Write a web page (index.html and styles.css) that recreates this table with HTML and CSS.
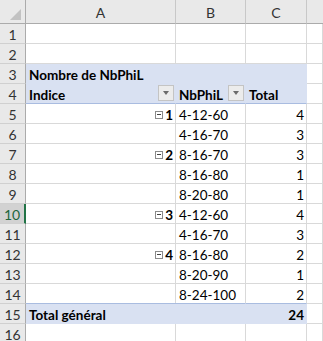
FILE: index.html
```html
<!DOCTYPE html>
<html>
<head>
<meta charset="utf-8">
<link rel="stylesheet" href="styles.css">
</head>
<body>
<div class="sheet">
  <div class="hd corner"><span class="tri"></span></div>
  <div class="hd col">A</div>
  <div class="hd col">B</div>
  <div class="hd col">C</div>
  <div class="hd col last"></div>

  <div class="hd rn">1</div><div class="c"></div><div class="c"></div><div class="c"></div><div class="c"></div>
  <div class="hd rn">2</div><div class="c"></div><div class="c"></div><div class="c"></div><div class="c"></div>

  <div class="hd rn">3</div><div class="c pv b span3">Nombre de NbPhiL</div><div class="c"></div>

  <div class="hd rn">4</div>
  <div class="c pv pvh b sb">Indice<span class="fbtn"><span class="arr"></span></span></div>
  <div class="c pv pvh b sb">NbPhiL<span class="fbtn"><span class="arr"></span></span></div>
  <div class="c pv pvh b">Total</div>
  <div class="c"></div>

  <div class="hd rn">5</div><div class="c r"><span class="mn"></span><b>1</b></div><div class="c">4-12-60</div><div class="c r">4</div><div class="c"></div>
  <div class="hd rn">6</div><div class="c"></div><div class="c">4-16-70</div><div class="c r">3</div><div class="c"></div>
  <div class="hd rn">7</div><div class="c r"><span class="mn"></span><b>2</b></div><div class="c">8-16-70</div><div class="c r">3</div><div class="c"></div>
  <div class="hd rn">8</div><div class="c"></div><div class="c">8-16-80</div><div class="c r">1</div><div class="c"></div>
  <div class="hd rn">9</div><div class="c"></div><div class="c">8-20-80</div><div class="c r">1</div><div class="c"></div>
  <div class="hd rn act">10</div><div class="c r"><span class="mn"></span><b>3</b></div><div class="c">4-12-60</div><div class="c r">4</div><div class="c"></div>
  <div class="hd rn">11</div><div class="c"></div><div class="c">4-16-70</div><div class="c r">3</div><div class="c"></div>
  <div class="hd rn">12</div><div class="c r"><span class="mn"></span><b>4</b></div><div class="c">8-16-80</div><div class="c r">2</div><div class="c"></div>
  <div class="hd rn">13</div><div class="c"></div><div class="c">8-20-90</div><div class="c r">1</div><div class="c"></div>
  <div class="hd rn">14</div><div class="c"></div><div class="c">8-24-100</div><div class="c r">2</div><div class="c"></div>

  <div class="hd rn">15</div><div class="c pv pvt b span2">Total général</div><div class="c pv pvt b r">24</div><div class="c"></div>
  <div class="hd rn">16</div><div class="c"></div><div class="c"></div><div class="c"></div><div class="c"></div>
</div>
</body>
</html>
```
FILE: styles.css
```css
html, body {
  margin: 0;
  padding: 0;
  background: #ffffff;
  overflow: hidden;
}
.sheet {
  display: grid;
  grid-template-columns: 26px 150px 70px 61px 16px;
  grid-template-rows: 24px;
  grid-auto-rows: 20px;
  width: 323px;
  height: 341px;
  overflow: hidden;
  font-family: Lato, "Open Sans", sans-serif;
  font-size: 13.5px;
  color: #000;
}
.hd {
  background: #e9e9e9;
  color: #333;
  box-sizing: border-box;
  border-right: 1px solid #c8c8c8;
  border-bottom: 1px solid #c8c8c8;
  display: flex;
  align-items: center;
  justify-content: center;
  font-size: 14px;
}
.col {
  border-bottom: 1px solid #ababab;
  padding-top: 1px;
}
.col.last { border-right: none; }
.rn {
  border-right: 1px solid #ababab;
  border-bottom: 1px solid #d0d0d0;
  padding-top: 2px;
}
.corner {
  border-right: 1px solid #ababab;
  border-bottom: 1px solid #ababab;
  position: relative;
}
.tri {
  position: absolute;
  right: 4px;
  bottom: 3px;
  width: 0;
  height: 0;
  border-left: 11px solid transparent;
  border-bottom: 11px solid #c2c2c2;
}
.rn.act {
  background: #d2d2d2;
  color: #21653c;
  border-right: 2px solid #217346;
}
.c {
  box-sizing: border-box;
  border-right: 1px solid #d9d9d9;
  border-bottom: 1px solid #d9d9d9;
  display: flex;
  align-items: center;
  padding: 2px 3px 0 3px;
  white-space: nowrap;
  overflow: visible;
}
.r { justify-content: flex-end; padding-right: 2px; }
.b, .c b { font-weight: 700; }
.pv {
  background: #d9e1f2;
  border-right-color: #d9e1f2;
  border-bottom-color: #d9e1f2;
}
.span3 { grid-column: span 3; }
.span2 { grid-column: span 2; }
.pvh {
  border-bottom: 1px solid #a9bce0;
}
.pvt {
  border-top: 1px solid #a9bce0;
  margin-top: -1px;
}
.sb { justify-content: space-between; padding-right: 1px; }
.fbtn {
  width: 16px;
  height: 16px;
  box-sizing: border-box;
  background: #ececec;
  border: 1px solid #c4c4c4;
  display: flex;
  align-items: center;
  justify-content: center;
  margin-bottom: 1px;
  align-self: flex-start;
  margin-top: -1px;
}
.arr {
  width: 0;
  height: 0;
  border-left: 3.5px solid transparent;
  border-right: 3.5px solid transparent;
  border-top: 4px solid #6b6b6b;
}
.mn {
  width: 8px;
  height: 8px;
  box-sizing: border-box;
  border: 1px solid #8a8a8a;
  position: relative;
  margin-right: 2px;
  background: #fff;
}
.mn::after {
  content: "";
  position: absolute;
  left: 1px;
  top: 2px;
  width: 4px;
  height: 1px;
  background: #444;
}
```
